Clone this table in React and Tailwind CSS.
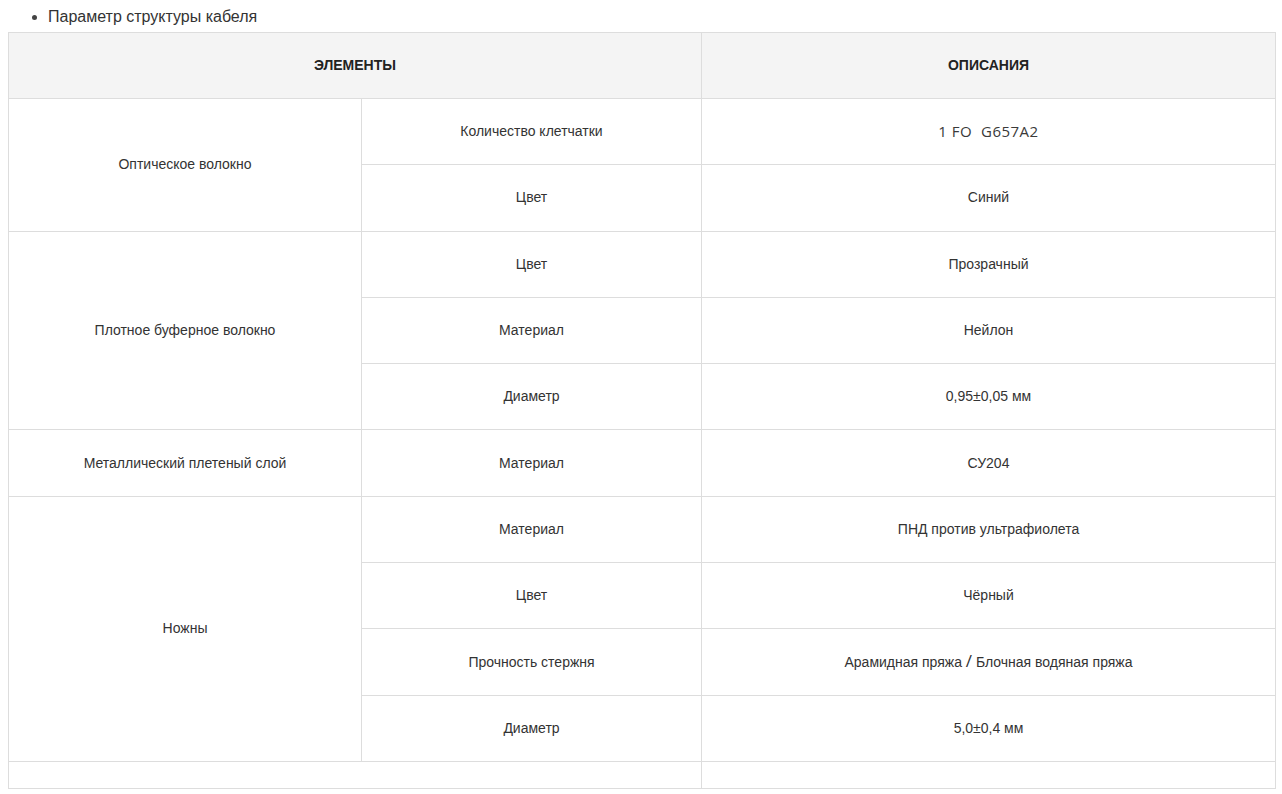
export default function App() {
  const rows = [
    { group: "Оптическое волокно", span: 2, item: "Количество клетчатки", value: "1 FO  G657A2", alt: true },
    { item: "Цвет", value: "Синий" },
    { group: "Плотное буферное волокно", span: 3, item: "Цвет", value: "Прозрачный" },
    { item: "Материал", value: "Нейлон" },
    { item: "Диаметр", value: "0,95±0,05 мм" },
    { group: "Металлический плетеный слой", span: 1, item: "Материал", value: "СУ204" },
    { group: "Ножны", span: 4, item: "Материал", value: "ПНД против ультрафиолета" },
    { item: "Цвет", value: "Чёрный" },
    { item: "Прочность стержня", value: "Арамидная пряжа / Блочная водяная пряжа", slash: true },
    { item: "Диаметр", value: "5,0±0,4 мм" },
  ];

  const cell = "border border-[#dddddd] text-center align-middle";

  return (
    <div className="min-h-screen bg-white font-['Liberation_Sans',Arial,sans-serif] text-[#333333]">
      <ul className="list-disc pl-10 mx-2 pt-[6px] pb-[4px] text-[16px] leading-[22px] text-[#333333] marker:text-[#444444]">
        <li>Параметр структуры кабеля</li>
      </ul>
      <div className="px-2">
        <table className="w-[1268px] table-fixed border-collapse text-[14px]">
          <colgroup>
            <col className="w-[353px]" />
            <col className="w-[340px]" />
            <col />
          </colgroup>
          <thead>
            <tr className="h-[66px] bg-[#f4f4f4]">
              <th colSpan={2} className={`${cell} font-bold text-[#222222]`}>
                ЭЛЕМЕНТЫ
              </th>
              <th className={`${cell} font-bold text-[#222222]`}>ОПИСАНИЯ</th>
            </tr>
          </thead>
          <tbody>
            {rows.map((r, i) => (
              <tr key={i} className="h-[66.3px]">
                {r.group && (
                  <td rowSpan={r.span} className={cell}>
                    {r.group}
                  </td>
                )}
                <td className={cell}>{r.item}</td>
                <td className={cell}>
                  {r.alt ? (
                    <span className="font-['Open_Sans',sans-serif] whitespace-pre text-[15px] tracking-[0.5px] text-[#3a3a3a]">
                      {r.value}
                    </span>
                  ) : r.slash ? (
                    <>
                      Арамидная пряжа{" "}
                      <span className="font-['Open_Sans',sans-serif] text-[17px] leading-none">/</span>{" "}
                      Блочная водяная пряжа
                    </>
                  ) : (
                    r.value
                  )}
                </td>
              </tr>
            ))}
            <tr className="h-[27px]">
              <td colSpan={2} className={cell}></td>
              <td className={cell}></td>
            </tr>
          </tbody>
        </table>
      </div>
    </div>
  );
}
